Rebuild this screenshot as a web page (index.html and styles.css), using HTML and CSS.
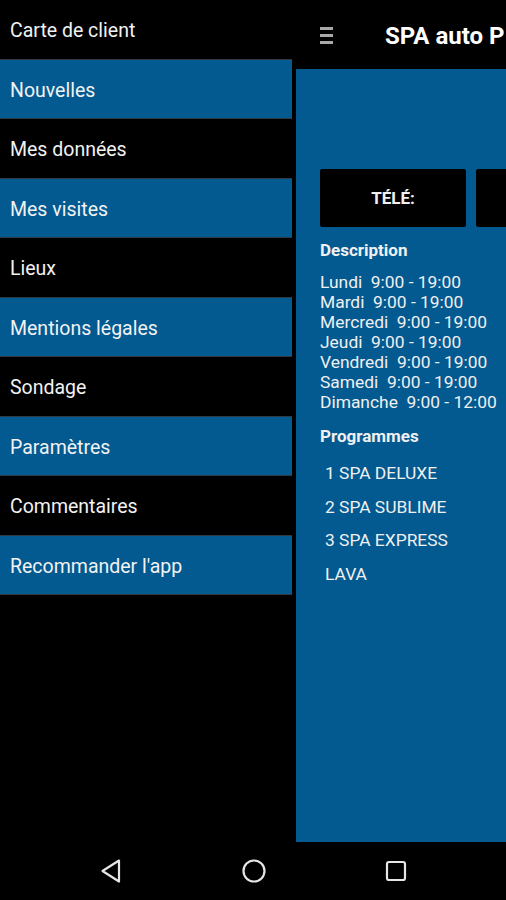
FILE: index.html
```html
<!DOCTYPE html>
<html lang="fr">
<head>
    <meta charset="UTF-8">
    <meta name="viewport" content="width=device-width, initial-scale=1.0">
    <title>SPA auto</title>
    <link rel="stylesheet" href="styles.css">
</head>
<body>
    <div class="screen">
        <div class="main">
            <nav class="drawer">
                <div class="item">Carte de client</div>
                <div class="item blue">Nouvelles</div>
                <div class="item">Mes données</div>
                <div class="item blue">Mes visites</div>
                <div class="item">Lieux</div>
                <div class="item blue">Mentions légales</div>
                <div class="item">Sondage</div>
                <div class="item blue">Paramètres</div>
                <div class="item">Commentaires</div>
                <div class="item blue">Recommander l'app</div>
            </nav>
            <div class="app">
                <div class="toolbar">
                    <div class="burger">
                        <span></span><span></span><span></span>
                    </div>
                    <div class="title">SPA auto P</div>
                </div>
                <div class="content">
                    <div class="buttons">
                        <div class="box">TÉLÉ:</div>
                        <div class="box"></div>
                    </div>
                    <div class="heading">Description</div>
                    <div class="hours">
                        <div>Lundi  9:00 - 19:00</div>
                        <div>Mardi  9:00 - 19:00</div>
                        <div>Mercredi  9:00 - 19:00</div>
                        <div>Jeudi  9:00 - 19:00</div>
                        <div>Vendredi  9:00 - 19:00</div>
                        <div>Samedi  9:00 - 19:00</div>
                        <div>Dimanche  9:00 - 12:00</div>
                    </div>
                    <div class="heading programmes">Programmes</div>
                    <div class="programs">
                        <div>1 SPA DELUXE</div>
                        <div>2 SPA SUBLIME</div>
                        <div>3 SPA EXPRESS</div>
                        <div>LAVA</div>
                    </div>
                </div>
            </div>
        </div>
        <div class="navbar">
            <svg width="24" height="26" viewBox="0 0 24 26">
                <path d="M20 2.5 L3.5 13 L20 23.5 Z" fill="none" stroke="#e6e6e6" stroke-width="2.2" stroke-linejoin="round"/>
            </svg>
            <svg width="26" height="26" viewBox="0 0 26 26">
                <circle cx="13" cy="13" r="10.5" fill="none" stroke="#e6e6e6" stroke-width="2.2"/>
            </svg>
            <svg width="24" height="24" viewBox="0 0 24 24">
                <rect x="3" y="3" width="18" height="18" rx="2" fill="none" stroke="#e6e6e6" stroke-width="2.2"/>
            </svg>
        </div>
    </div>
</body>
</html>
```

FILE: styles.css
```css
body {
    margin: 0;
    background-color: #000;
    font-family: Roboto, "Liberation Sans", sans-serif;
    color: #f0f0f0;
}

.screen {
    width: 506px;
    height: 900px;
    display: flex;
    flex-direction: column;
    overflow: hidden;
}

.main {
    flex: 1;
    display: flex;
    min-height: 0;
}

.drawer {
    width: 292px;
    margin-right: 4px;
    flex-shrink: 0;
    background-color: #000;
}

.item {
    height: 59.5px;
    border-bottom: 1px solid #2e3a44;
    padding-left: 10px;
    padding-top: 3px;
    display: flex;
    align-items: center;
    font-size: 19.5px;
    color: #f2f2f2;
    box-sizing: border-box;
}

.item.blue {
    background-color: #035a91;
}

.app {
    flex: 1;
    display: flex;
    flex-direction: column;
    min-width: 0;
}

.toolbar {
    height: 69px;
    flex-shrink: 0;
    display: flex;
    align-items: center;
    background-color: #000;
    overflow: hidden;
}

.burger {
    width: 13px;
    margin-left: 24px;
    margin-right: 52px;
    padding-top: 1px;
    display: flex;
    flex-direction: column;
    gap: 4px;
    flex-shrink: 0;
}

.burger span {
    height: 3px;
    background-color: #a8a8a8;
}

.title {
    font-size: 24px;
    font-weight: bold;
    white-space: nowrap;
    color: #fff;
    padding-top: 3px;
}

.content {
    flex: 1;
    background-color: #035a91;
    padding: 100px 0 0 24px;
    overflow: hidden;
}

.buttons {
    display: flex;
    gap: 10px;
}

.box {
    width: 146px;
    height: 58px;
    flex-shrink: 0;
    background-color: #000;
    border-radius: 2px;
    display: flex;
    align-items: center;
    justify-content: center;
    font-size: 17px;
    font-weight: bold;
}

.heading {
    font-size: 17px;
    font-weight: bold;
    margin-top: 12px;
    line-height: 22px;
}

.hours {
    margin-top: 11px;
    font-size: 17.4px;
    line-height: 20px;
}

.hours div {
    white-space: pre;
}

.heading.programmes {
    margin-top: 13px;
}

.programs {
    margin-top: 10px;
    padding-left: 5px;
    font-size: 17.4px;
    line-height: 33.5px;
}

.navbar {
    height: 58px;
    flex-shrink: 0;
    display: flex;
    align-items: center;
    background-color: #000;
}

.navbar svg:nth-child(1) {
    margin-left: 99px;
}

.navbar svg:nth-child(2) {
    margin-left: 118px;
}

.navbar svg:nth-child(3) {
    margin-left: 117px;
}
```
